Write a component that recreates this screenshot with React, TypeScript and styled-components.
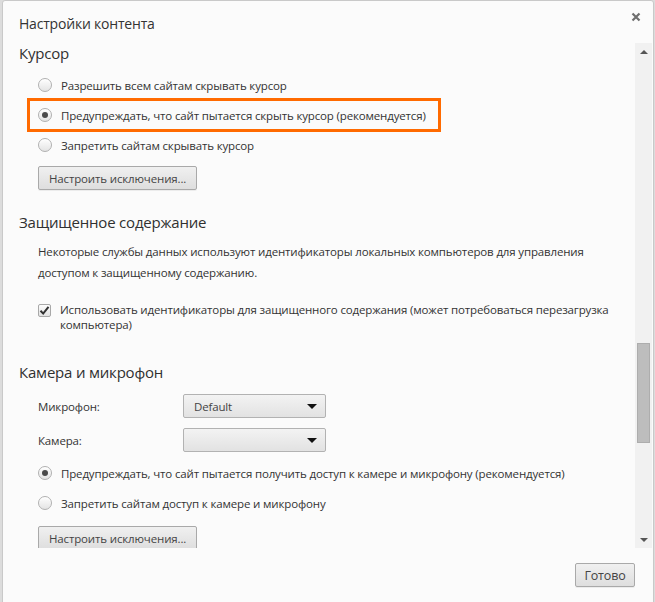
import { FC, ReactNode } from 'react';
import styled, { createGlobalStyle } from 'styled-components';

const GlobalStyle = createGlobalStyle`
	html, body {
		margin: 0;
		padding: 0;
		height: 100%;
		overflow: hidden;
		background: #dcdcdc;
	}
	#root {
		height: 100%;
	}
	* {
		box-sizing: border-box;
	}
`;

const font = `'Open Sans', 'Noto Sans', sans-serif`;

const Radio: FC<{ checked?: boolean; children: ReactNode }> = ({ checked, children }) => (
	<OptionRow>
		<RadioDot $checked={checked} />
		<span>{children}</span>
	</OptionRow>
);

const Select: FC<{ value?: string }> = ({ value }) => (
	<SelectBox>
		<span>{value}</span>
		<Caret />
	</SelectBox>
);

const App: FC = () => {
	return (
		<>
			<GlobalStyle />
			<Dialog>
				<Header>
					<Title>Настройки контента</Title>
					<Close>
						<svg width='10' height='10' viewBox='0 0 10 10'>
							<path d='M1.5 1.5 L8.5 8.5 M8.5 1.5 L1.5 8.5' stroke='#6f6f6f' strokeWidth='2.2' />
						</svg>
					</Close>
				</Header>
				<Body>
					<Content>
						<Section>
							<Heading>Курсор</Heading>
							<Options>
								<Radio>Разрешить всем сайтам скрывать курсор</Radio>
								<Highlight>
									<Radio checked>
										Предупреждать, что сайт пытается скрыть курсор (рекомендуется)
									</Radio>
								</Highlight>
								<Radio>Запретить сайтам скрывать курсор</Radio>
							</Options>
							<Button>Настроить исключения...</Button>
						</Section>
						<Section $bottom={26}>
							<Heading>Защищенное содержание</Heading>
							<Paragraph>
								Некоторые службы данных используют идентификаторы локальных компьютеров для управления
								доступом к защищенному содержанию.
							</Paragraph>
							<CheckRow>
								<CheckBox>
									<svg width='11' height='11' viewBox='0 0 11 11'>
										<path d='M1.5 5.8 L4.2 8.6 L9.5 1.8' fill='none' stroke='#333' strokeWidth='2' />
									</svg>
								</CheckBox>
								<span>
									Использовать идентификаторы для защищенного содержания (может потребоваться
									перезагрузка компьютера)
								</span>
							</CheckRow>
						</Section>
						<Section>
							<Heading>Камера и микрофон</Heading>
							<DeviceGrid>
								<span>Микрофон:</span>
								<Select value='Default' />
								<span>Камера:</span>
								<Select />
							</DeviceGrid>
							<Options>
								<Radio checked>
									Предупреждать, что сайт пытается получить доступ к камере и микрофону (рекомендуется)
								</Radio>
								<Radio>Запретить сайтам доступ к камере и микрофону</Radio>
							</Options>
							<Button $top={8}>Настроить исключения...</Button>
						</Section>
					</Content>
					<Scrollbar>
						<Arrow $dir='up' />
						<Track>
							<Thumb style={{ marginTop: 283 }} />
						</Track>
						<Arrow $dir='down' />
					</Scrollbar>
				</Body>
				<Footer>
					<Button>Готово</Button>
				</Footer>
			</Dialog>
		</>
	);
};

const Dialog = styled.div`
	display: flex;
	flex-direction: column;
	height: calc(100% + 4px);
	margin: 0 1px 0 2px;
	background: #fbfbfb;
	border: 1px solid #c9c9c9;
	border-radius: 3px;
	font-family: ${font};
	font-size: 11.5px;
	letter-spacing: -0.15px;
	color: #333;
`;

const Header = styled.div`
	display: flex;
	align-items: flex-start;
	justify-content: space-between;
	height: 42px;
	padding: 13px 12px 0 16px;
	flex-shrink: 0;
`;

const Title = styled.div`
	font-size: 14px;
	letter-spacing: -0.2px;
	color: #333;
`;

const Close = styled.div`
	display: flex;
	margin-top: -2px;
`;

const Body = styled.div`
	display: flex;
	height: 505px;
	flex-shrink: 0;
`;

const Content = styled.div`
	flex: 1;
	overflow: hidden;
	padding: 0 0 0 16px;
`;

const Section = styled.div<{ $bottom?: number }>`
	display: flex;
	flex-direction: column;
	align-items: flex-start;
	padding-bottom: ${(p) => p.$bottom ?? 22}px;
`;

const Heading = styled.div`
	font-size: 15px;
	letter-spacing: -0.2px;
	line-height: 20px;
	color: #303030;
	margin-bottom: 7px;
`;

const Options = styled.div`
	display: flex;
	flex-direction: column;
	margin-left: 19px;
	align-items: flex-start;
`;

const OptionRow = styled.div`
	display: flex;
	align-items: center;
	gap: 9px;
	height: 30px;
	white-space: nowrap;
`;

const Highlight = styled.div`
	border: 3px solid #ff6a00;
	margin: -2px 0 -2px -11px;
	padding: 0 12px 0 8px;
	height: 34px;
	display: flex;
	align-items: center;
`;

const RadioDot = styled.span<{ $checked?: boolean }>`
	position: relative;
	width: 14px;
	height: 14px;
	border-radius: 50%;
	border: 1px solid #b0b0b0;
	background: linear-gradient(#fefefe, #e4e4e4);
	box-shadow: inset 0 1px 1px #fff;
	flex-shrink: 0;
	&::after {
		content: '';
		display: ${(p) => (p.$checked ? 'block' : 'none')};
		position: absolute;
		left: 3px;
		top: 3px;
		width: 6px;
		height: 6px;
		border-radius: 50%;
		background: #4a4a4a;
	}
`;

const Button = styled.button<{ $top?: number }>`
	font-family: ${font};
	font-size: 11.5px;
	letter-spacing: -0.15px;
	color: #444;
	height: 24px;
	padding: 0 10px;
	margin: ${(p) => p.$top ?? 6}px 0 0 19px;
	border: 1px solid #a9a9a9;
	border-radius: 2px;
	background: linear-gradient(#f0f0f0, #dedede);
	box-shadow: 0 1px 0 rgba(0, 0, 0, 0.06);
`;

const Paragraph = styled.div`
	margin: 2px 0 0 19px;
	line-height: 21px;
	padding-right: 20px;
`;

const CheckRow = styled.div`
	display: flex;
	gap: 9px;
	margin: 19px 0 4px 19px;
	line-height: 15px;
	padding-right: 10px;
`;

const CheckBox = styled.span`
	display: flex;
	align-items: center;
	justify-content: center;
	width: 13px;
	height: 13px;
	margin-top: 2px;
	flex-shrink: 0;
	border: 1px solid #a8a8a8;
	border-radius: 2px;
	background: linear-gradient(#fdfdfd, #e2e2e2);
`;

const DeviceGrid = styled.div`
	display: grid;
	grid-template-columns: 145px 143px;
	grid-auto-rows: 24px;
	row-gap: 10px;
	align-items: center;
	margin: 5px 0 6px 19px;
`;

const SelectBox = styled.div`
	display: flex;
	align-items: center;
	justify-content: space-between;
	height: 24px;
	padding: 0 8px 0 10px;
	border: 1px solid #b2b2b2;
	border-radius: 2px;
	background: linear-gradient(#f3f3f3, #e2e2e2);
	color: #444;
`;

const Caret = styled.span`
	width: 0;
	height: 0;
	border-left: 5px solid transparent;
	border-right: 5px solid transparent;
	border-top: 5px solid #111;
`;

const Scrollbar = styled.div`
	display: flex;
	flex-direction: column;
	width: 17px;
	margin-right: 1px;
	background: #f1f1f1;
`;

const Track = styled.div`
	flex: 1;
	padding: 0 2px;
`;

const Thumb = styled.div`
	height: 100px;
	background: #bdbdbd;
	border: 1px solid #adadad;
`;

const Arrow = styled.div<{ $dir: 'up' | 'down' }>`
	height: 17px;
	display: flex;
	align-items: center;
	justify-content: center;
	&::before {
		content: '';
		border-left: 4px solid transparent;
		border-right: 4px solid transparent;
		${(p) => (p.$dir === 'up' ? 'border-bottom: 4px solid #555;' : 'border-top: 4px solid #555;')}
	}
`;

const Footer = styled.div`
	display: flex;
	justify-content: flex-end;
	padding: 15px 18px 0 0;
	${Button} {
		margin: 0;
		width: 60px;
		padding: 0;
		font-size: 12.5px;
	}
`;

export default App;
